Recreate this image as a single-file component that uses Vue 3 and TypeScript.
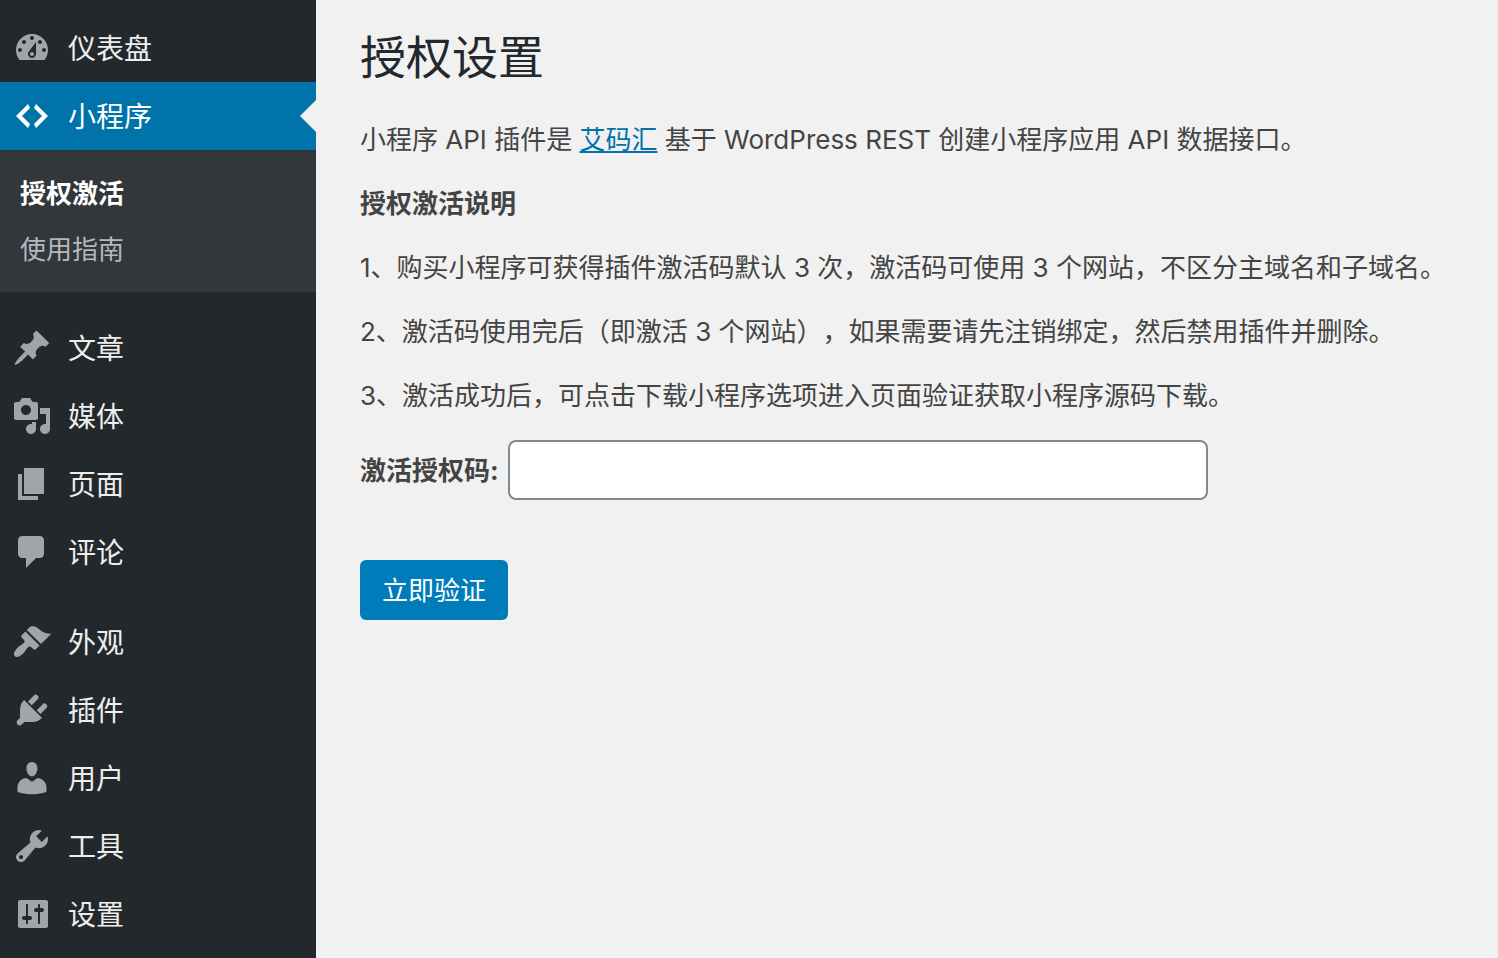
<script setup lang="ts">
import { ref } from 'vue'

interface MenuItem {
  label: string
  icon: string
  active?: boolean
  children?: { label: string; current?: boolean }[]
}

const groups: MenuItem[][] = [
  [
    {
      label: '仪表盘',
      icon: 'M3.76 16h12.48C17.34 14.63 18 12.9 18 11c0-4.41-3.58-8-8-8s-8 3.59-8 8c0 1.9.66 3.63 1.76 5zM10 4c.55 0 1 .45 1 1s-.45 1-1 1-1-.45-1-1 .45-1 1-1zM6 6c.55 0 1 .45 1 1s-.45 1-1 1-1-.45-1-1 .45-1 1-1zm8 0c.55 0 1 .45 1 1s-.45 1-1 1-1-.45-1-1 .45-1 1-1zm-5.37 5.55L12 7v6c0 1.1-.9 2-2 2s-2-.9-2-2c0-.57.24-1.08.63-1.45zM4 10c.55 0 1 .45 1 1s-.45 1-1 1-1-.45-1-1 .45-1 1-1zm12 0c.55 0 1 .45 1 1s-.45 1-1 1-1-.45-1-1 .45-1 1-1zm-5 3c0-.55-.45-1-1-1s-1 .45-1 1 .45 1 1 1 1-.45 1-1z',
    },
    {
      label: '小程序',
      icon: 'M9 6l-4 4 4 4-1 2-6-6 6-6zm2 8l4-4-4-4 1-2 6 6-6 6z',
      active: true,
      children: [{ label: '授权激活', current: true }, { label: '使用指南' }],
    },
  ],
  [
    {
      label: '文章',
      icon: 'M10.44 3.02l1.82-1.82 6.36 6.35-1.83 1.82c-1.05-.68-2.48-.57-3.41.36l-.75.75c-.92.93-1.04 2.35-.35 3.41l-1.83 1.82-2.41-2.41-2.8 2.79c-.42.42-3.38 2.71-3.8 2.29s1.86-3.39 2.28-3.81l2.79-2.79L4.1 9.36l1.83-1.82c1.05.69 2.48.57 3.4-.36l.75-.75c.93-.92 1.05-2.35.36-3.41z',
    },
    {
      label: '媒体',
      icon: 'M13 11V4c0-.55-.45-1-1-1h-1.67L9 1H5L3.67 3H2c-.55 0-1 .45-1 1v7c0 .55.45 1 1 1h10c.55 0 1-.45 1-1zM7 4.5c1.38 0 2.5 1.12 2.5 2.5S8.38 9.5 7 9.5 4.5 8.38 4.5 7 5.62 4.5 7 4.5zM14 6h5v10.5c0 1.38-1.12 2.5-2.5 2.5S14 17.88 14 16.5s1.12-2.5 2.5-2.5c.17 0 .34.02.5.05V9h-3V6zm-4 8.05V13h2v3.5c0 1.38-1.12 2.5-2.5 2.5S7 17.88 7 16.5 8.12 14 9.5 14c.17 0 .34.02.5.05z',
    },
    { label: '页面', icon: 'M6 15V2h10v13H6zm-1 1h8v2H3V5h2v11z' },
    {
      label: '评论',
      icon: 'M5 2h9c1.1 0 2 .9 2 2v7c0 1.1-.9 2-2 2h-2l-5 5v-5H5c-1.1 0-2-.9-2-2V4c0-1.1.9-2 2-2z',
    },
  ],
  [
    {
      label: '外观',
      icon: 'M14.48 11.06L7.41 3.99l1.5-1.5c.5-.56 2.3-.47 3.51.32 1.21.8 1.43 1.28 2.91 2.1 1.18.64 2.45 1.26 4.45.85zm-.71.71L6.7 4.7 4.93 6.47c-.39.39-.39 1.02 0 1.41l1.06 1.06c.39.39.39 1.03 0 1.42-.6.6-1.43 1.11-2.21 1.69-.35.26-.7.53-1.01.84C1.43 14.23.4 16.08 1.4 17.07c.99 1 2.84-.03 4.18-1.36.31-.31.58-.66.85-1.02.57-.78 1.08-1.61 1.69-2.21.39-.39 1.02-.39 1.41 0l1.06 1.06c.39.39 1.02.39 1.41 0z',
    },
    {
      label: '插件',
      icon: 'M13.11 4.36L9.87 7.6 8 5.73l3.24-3.24c.35-.34 1.05-.2 1.56.32.52.51.66 1.21.31 1.55zm-8 1.77l.91-1.12 9.01 9.01-1.19.84c-.71.71-2.63 1.16-3.82 1.16H6.14L4.9 17.26c-.59.59-1.54.59-2.12 0-.59-.58-.59-1.53 0-2.12l1.24-1.24v-3.88c0-1.13.4-3.19 1.09-3.89zm7.26 3.97l3.24-3.24c.34-.35 1.04-.21 1.55.31.52.51.66 1.21.31 1.55l-3.24 3.25z',
    },
    {
      label: '用户',
      icon: 'M10 9.25c-2.27 0-2.73-3.44-2.73-3.44C7 4.02 7.82 2 9.97 2c2.16 0 2.98 2.02 2.71 3.81 0 0-.41 3.44-2.68 3.44zm0 2.57L12.72 10c2.39 0 4.52 2.33 4.52 4.53v2.49s-3.65 1.13-7.24 1.13c-3.65 0-7.24-1.13-7.24-1.13v-2.49c0-2.25 1.94-4.48 4.47-4.48z',
    },
    {
      label: '工具',
      icon: 'M16.68 9.77c-1.34 1.34-3.3 1.67-4.95.99l-5.41 6.52c-.99.99-2.59.99-3.58 0s-.99-2.59 0-3.57l6.52-5.42c-.68-1.65-.35-3.61.99-4.95 1.28-1.28 3.12-1.62 4.72-1.06l-2.89 2.89 2.82 2.82 2.86-2.87c.53 1.58.18 3.39-1.08 4.65zM3.81 16.21c.4.39 1.04.39 1.43 0 .4-.4.4-1.04 0-1.43-.39-.4-1.03-.4-1.43 0-.39.39-.39 1.03 0 1.43z',
    },
    {
      label: '设置',
      icon: 'M18 16V4c0-.55-.45-1-1-1H4c-.55 0-1 .45-1 1v12c0 .55.45 1 1 1h13c.55 0 1-.45 1-1zM8 11h1c.55 0 1 .45 1 1s-.45 1-1 1H8v1.5c0 .28-.22.5-.5.5s-.5-.22-.5-.5V13H6c-.55 0-1-.45-1-1s.45-1 1-1h1V5.5c0-.28.22-.5.5-.5s.5.22.5.5V11zm5-2h-1c-.55 0-1-.45-1-1s.45-1 1-1h1V5.5c0-.28.22-.5.5-.5s.5.22.5.5V7h1c.55 0 1 .45 1 1s-.45 1-1 1h-1v5.5c0 .28-.22.5-.5.5s-.5-.22-.5-.5V9z',
    },
  ],
]

const code = ref('')
</script>

<template>
  <div class="admin">
    <nav class="sidebar">
      <ul v-for="(group, g) in groups" :key="g" class="group">
        <li v-for="item in group" :key="item.label">
          <a href="#" class="item" :class="{ active: item.active }">
            <svg class="icon" viewBox="0 0 20 20" aria-hidden="true">
              <path :d="item.icon" fill="currentColor" fill-rule="evenodd" />
            </svg>
            <span class="name">{{ item.label }}</span>
          </a>
          <ul v-if="item.children" class="submenu">
            <li v-for="child in item.children" :key="child.label">
              <a href="#" class="subitem" :class="{ current: child.current }">{{ child.label }}</a>
            </li>
          </ul>
        </li>
      </ul>
    </nav>

    <main class="content">
      <h1>授权设置</h1>
      <p>小程序 API 插件是 <a href="#">艾码汇</a> 基于 WordPress REST 创建小程序应用 API 数据接口。</p>
      <p><strong>授权激活说明</strong></p>
      <p>1、购买小程序可获得插件激活码默认 3 次，激活码可使用 3 个网站，不区分主域名和子域名。</p>
      <p>2、激活码使用完后（即激活 3 个网站），如果需要请先注销绑定，然后禁用插件并删除。</p>
      <p>3、激活成功后，可点击下载小程序选项进入页面验证获取小程序源码下载。</p>
      <form @submit.prevent>
        <div class="field">
          <label for="license">激活授权码:</label>
          <input id="license" v-model="code" type="text" />
        </div>
        <button type="submit">立即验证</button>
      </form>
    </main>
  </div>
</template>

<style>
body {
  margin: 0;
  background: #f1f1f1;
}
</style>

<style scoped>
.admin {
  display: flex;
  min-height: 100vh;
  font-family: Inter, "Noto Sans CJK SC", sans-serif;
  font-size: 26px;
  line-height: 40px;
  text-spacing-trim: space-all;
  color: #444;
}

.sidebar {
  display: flex;
  flex-direction: column;
  gap: 22px;
  flex: none;
  box-sizing: border-box;
  width: 316px;
  padding-top: 14px;
  background: #23282d;
}

ul {
  margin: 0;
  padding: 0;
  list-style: none;
}

.item {
  position: relative;
  display: flex;
  align-items: center;
  gap: 16px;
  height: 68px;
  padding-left: 12px;
  font-size: 28px;
  color: #eee;
  text-decoration: none;
}

.icon {
  width: 40px;
  height: 40px;
  color: #a0a5aa;
}

.name,
label {
  padding-top: 2px;
}

.item.active {
  background: #0073aa;
  color: #fff;
}

.item.active .icon {
  color: #fff;
}

.item.active::after {
  content: "";
  position: absolute;
  top: 18px;
  right: 0;
  border: 16px solid transparent;
  border-left-width: 0;
  border-right-color: #f1f1f1;
}

.submenu {
  padding: 16px 0 14px;
  background: #32373c;
}

.subitem {
  display: block;
  padding: 8px 20px;
  color: #b4b9be;
  text-decoration: none;
}

.subitem.current {
  font-weight: 700;
  color: #fff;
}

.content {
  flex: 1;
  min-width: 0;
  padding: 27px 40px 40px 44px;
}

h1 {
  margin: 0 0 33px;
  font-size: 46px;
  font-weight: 400;
  line-height: 60px;
  color: #23282d;
}

p {
  margin: 0 0 24px;
}

p a {
  color: #0073aa;
}

.field {
  display: flex;
  align-items: center;
  gap: 9px;
  margin-bottom: 60px;
}

label {
  font-weight: 700;
}

input {
  box-sizing: border-box;
  width: 700px;
  height: 60px;
  padding: 0 16px;
  border: 2px solid #7e8993;
  border-radius: 8px;
  background: #fff;
  font: inherit;
  color: #32373c;
}

button {
  height: 60px;
  padding: 2px 22px 0;
  border: 0;
  border-radius: 6px;
  background: #007cba;
  font: inherit;
  color: #fff;
}
</style>
